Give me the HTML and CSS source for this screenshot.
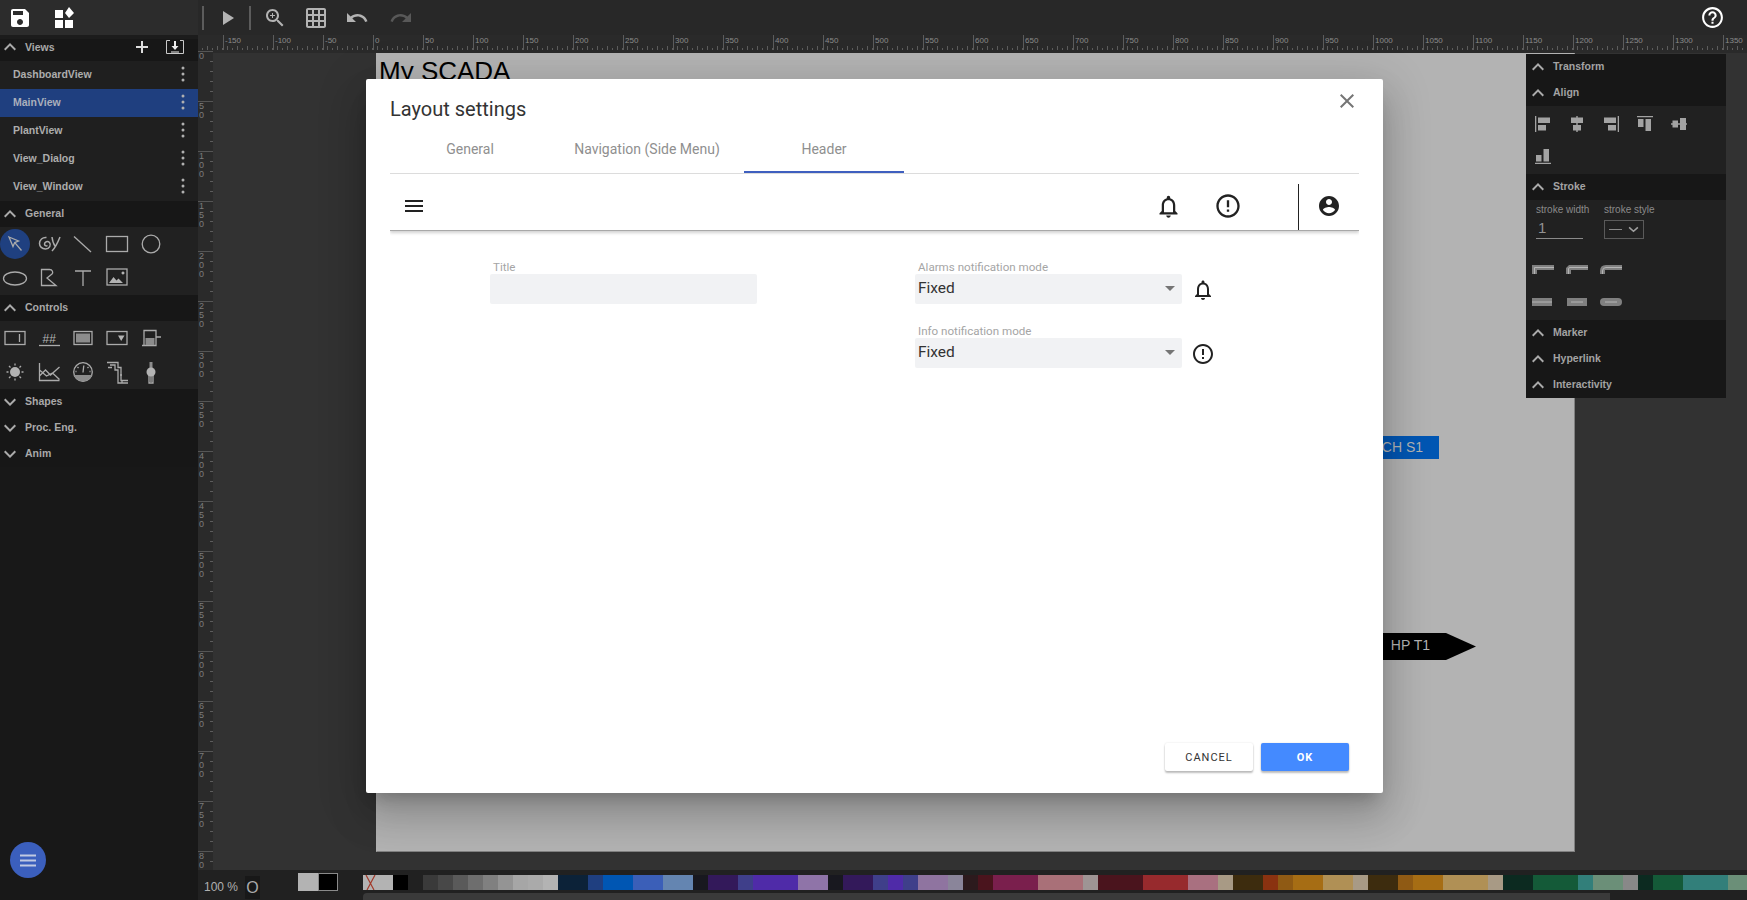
FILE: index.html
```html
<!DOCTYPE html>
<html lang="en">
<head>
<meta charset="utf-8">
<title>Layout settings</title>
<link rel="stylesheet" href="styles.css">
</head>
<body>
<svg class="sprite" aria-hidden="true">
  <symbol id="i-save" viewBox="0 0 24 24"><path d="M17 3H5c-1.11 0-2 .9-2 2v14c0 1.1.89 2 2 2h14c1.1 0 2-.9 2-2V7l-4-4zm-5 16c-1.66 0-3-1.34-3-3s1.34-3 3-3 3 1.34 3 3-1.34 3-3 3zm3-10H5V5h10v4z"/></symbol>
  <symbol id="i-dash" viewBox="0 0 24 24"><path d="M3 4h8v8H3zM3 14h8v8H3zM13 14h8v8h-8zM17 1l5 6-5 5-4-5z"/></symbol>
  <symbol id="i-play" viewBox="0 0 24 24"><path d="M8 5v14l11-7z"/></symbol>
  <symbol id="i-zoom" viewBox="0 0 24 24"><path d="M15.5 14h-.79l-.28-.27C15.41 12.59 16 11.11 16 9.5 16 5.91 13.09 3 9.5 3S3 5.91 3 9.5 5.91 16 9.5 16c1.61 0 3.09-.59 4.23-1.57l.27.28v.79l5 4.99L20.49 19l-4.99-5zm-6 0C7.01 14 5 11.99 5 9.5S7.01 5 9.5 5 14 7.01 14 9.5 11.99 14 9.5 14zm2.5-4h-2v2H9v-2H7V9h2V7h1v2h2v1z"/></symbol>
  <symbol id="i-grid" viewBox="0 0 24 24"><path d="M20 2H4c-1.1 0-2 .9-2 2v16c0 1.1.9 2 2 2h16c1.1 0 2-.9 2-2V4c0-1.1-.9-2-2-2zM8 20H4v-4h4v4zm0-6H4v-4h4v4zm0-6H4V4h4v4zm6 12h-4v-4h4v4zm0-6h-4v-4h4v4zm0-6h-4V4h4v4zm6 12h-4v-4h4v4zm0-6h-4v-4h4v4zm0-6h-4V4h4v4z"/></symbol>
  <symbol id="i-undo" viewBox="0 0 24 24"><path d="M12.5 8c-2.65 0-5.05.99-6.9 2.6L2 7v9h9l-3.62-3.62c1.39-1.16 3.16-1.88 5.12-1.88 3.54 0 6.55 2.31 7.6 5.5l2.37-.78C21.08 11.03 17.15 8 12.5 8z"/></symbol>
  <symbol id="i-redo" viewBox="0 0 24 24"><path d="M18.4 10.6C16.55 8.99 14.15 8 11.5 8c-4.65 0-8.58 3.03-9.96 7.22L3.9 16c1.05-3.19 4.05-5.5 7.6-5.5 1.95 0 3.73.72 5.12 1.88L13 16h9V7l-3.6 3.6z"/></symbol>
  <symbol id="i-help" viewBox="0 0 24 24"><path d="M11 18h2v-2h-2v2zm1-16C6.48 2 2 6.48 2 12s4.48 10 10 10 10-4.48 10-10S17.52 2 12 2zm0 18c-4.41 0-8-3.59-8-8s3.59-8 8-8 8 3.59 8 8-3.59 8-8 8zm0-14c-2.21 0-4 1.79-4 4h2c0-1.1.9-2 2-2s2 .9 2 2c0 2-3 1.75-3 5h2c0-2.25 3-2.5 3-5 0-2.21-1.79-4-4-4z"/></symbol>
  <symbol id="i-menu" viewBox="0 0 24 24"><path d="M3 18h18v-2H3v2zm0-5h18v-2H3v2zm0-7v2h18V6H3z"/></symbol>
  <symbol id="i-bell" viewBox="0 0 24 24"><path d="M12 22c1.1 0 2-.9 2-2h-4c0 1.1.9 2 2 2zm6-6v-5c0-3.07-1.63-5.64-4.5-6.32V4c0-.83-.67-1.5-1.5-1.5s-1.5.67-1.5 1.5v.68C7.64 5.36 6 7.92 6 11v5l-2 2v1h16v-1l-2-2zm-2 1H8v-6c0-2.48 1.51-4.5 4-4.5s4 2.02 4 4.5v6z"/></symbol>
  <symbol id="i-alert" viewBox="0 0 24 24"><path d="M11 15h2v2h-2zm0-8h2v6h-2zm.99-5C6.47 2 2 6.48 2 12s4.47 10 9.99 10C17.52 22 22 17.52 22 12S17.52 2 11.99 2zM12 20c-4.42 0-8-3.58-8-8s3.58-8 8-8 8 3.58 8 8-3.58 8-8 8z"/></symbol>
  <symbol id="i-account" viewBox="0 0 24 24"><path d="M12 2C6.48 2 2 6.48 2 12s4.48 10 10 10 10-4.48 10-10S17.52 2 12 2zm0 3c1.66 0 3 1.34 3 3s-1.34 3-3 3-3-1.34-3-3 1.34-3 3-3zm0 14.2c-2.5 0-4.71-1.28-6-3.22.03-1.99 4-3.08 6-3.08 1.99 0 5.97 1.09 6 3.08-1.29 1.94-3.5 3.22-6 3.22z"/></symbol>
  <symbol id="i-close" viewBox="0 0 24 24"><path d="M19 6.41L17.59 5 12 10.59 6.41 5 5 6.41 10.59 12 5 17.59 6.41 19 12 13.41 17.59 19 19 17.59 13.41 12z"/></symbol>
  <symbol id="i-up" viewBox="0 0 24 24"><path d="M12 8l-6 6 1.41 1.41L12 10.83l4.59 4.58L18 14z"/></symbol>
  <symbol id="i-down" viewBox="0 0 24 24"><path d="M16.59 8.59L12 13.17 7.41 8.59 6 10l6 6 6-6z"/></symbol>
  <symbol id="i-kebab" viewBox="0 0 18 18"><circle cx="9" cy="3" r="1.5"/><circle cx="9" cy="9" r="1.5"/><circle cx="9" cy="15" r="1.5"/></symbol>
</svg>

<div class="app">
  <aside class="sidebar">
    <div class="side-tools">
      <svg class="ico ico-save"><use href="#i-save"/></svg>
      <svg class="ico ico-dash"><use href="#i-dash"/></svg>
    </div>
    <div class="sec-head first"><svg class="chev"><use href="#i-up"/></svg><span class="sec-title">Views</span>
      <svg class="ico-add" viewBox="0 0 12 12"><path d="M5 0h2v5h5v2H7v5H5V7H0V5h5z"/></svg>
      <svg class="ico-import" viewBox="0 0 18 14"><path class="imp-box" d="M4 .5H.5v13h17V.5H14"/><path class="imp-arrow" d="M8 1h2v5h2.5L9 10 5.500 6H8z"/><path class="imp-arrow" d="M5 11.500h8v1H5z"/></svg>
    </div>
    <div class="view-row"><span>DashboardView</span><svg class="kebab"><use href="#i-kebab"/></svg></div>
    <div class="view-row active"><span>MainView</span><svg class="kebab"><use href="#i-kebab"/></svg></div>
    <div class="view-row"><span>PlantView</span><svg class="kebab"><use href="#i-kebab"/></svg></div>
    <div class="view-row"><span>View_Dialog</span><svg class="kebab"><use href="#i-kebab"/></svg></div>
    <div class="view-row"><span>View_Window</span><svg class="kebab"><use href="#i-kebab"/></svg></div>

    <div class="sec-head"><svg class="chev"><use href="#i-up"/></svg><span class="sec-title">General</span></div>
    <div class="tool-grid">
      <div class="tool selected"><svg viewBox="0 0 30 30"><path class="ln" d="M9 8l9.500 4-3.800 1.600L13 17.500zM14.800 13.700L21.500 21.500"/></svg></div>
      <div class="tool"><svg viewBox="0 0 30 30"><path class="ln2" d="M13.500 16.500c-1.500 1-3 0-3-1.500 0-2 3-3.500 5-1.500 2 2.500 0 6.500-4 6.500-3.500 0-6-2.500-6-5.500 0-3.500 3-6.500 7-6M18 8c.5 4 1.500 7 3 9M26 8c-2 5-5 11-8 14"/></svg></div>
      <div class="tool"><svg viewBox="0 0 30 30"><path class="ln" d="M6 7.500L23 23"/></svg></div>
      <div class="tool"><svg viewBox="0 0 30 30"><rect class="ln" x="4.500" y="7.500" width="21" height="15"/></svg></div>
      <div class="tool"><svg viewBox="0 0 30 30"><circle class="ln" cx="15" cy="15" r="8.800"/></svg></div>
      <div class="tool"><svg viewBox="0 0 30 30"><ellipse class="ln" cx="15" cy="15.500" rx="11.500" ry="6.500"/></svg></div>
      <div class="tool"><svg viewBox="0 0 30 30"><path class="ln" d="M7.500 6.500h8c3 0 4 3 2.500 4.500L13 15l9 7.500H7.500z"/></svg></div>
      <div class="tool"><svg viewBox="0 0 30 30"><path class="ln" d="M7 8h16M15 8v15"/></svg></div>
      <div class="tool"><svg viewBox="0 0 30 30"><rect class="ln" x="5" y="6" width="20" height="16"/><path class="fl" d="M7 20l4.500-6 3 3.500 2-2 4.500 4.500zM21 8.500a1.500 1.500 0 1 1-.01 0z"/></svg></div>
    </div>

    <div class="sec-head"><svg class="chev"><use href="#i-up"/></svg><span class="sec-title">Controls</span></div>
    <div class="tool-grid">
      <div class="tool"><svg viewBox="0 0 30 30"><rect class="ln" x="5" y="8.500" width="20" height="13"/><path class="ln" d="M19.500 11v8"/></svg></div>
      <div class="tool"><svg viewBox="0 0 30 30"><text class="hash" x="15" y="19.500" text-anchor="middle">##</text><path class="ln" d="M5 22.500h21"/></svg></div>
      <div class="tool"><svg viewBox="0 0 30 30"><rect class="ln" x="6" y="8.500" width="18" height="13"/><rect class="fl-dim" x="8" y="10.500" width="14" height="9"/></svg></div>
      <div class="tool"><svg viewBox="0 0 30 30"><rect class="ln" x="5" y="8.500" width="20" height="13"/><path class="fl" d="M16 12.500h6.500L19.200 18z"/></svg></div>
      <div class="tool"><svg viewBox="0 0 30 30"><path class="ln" d="M8 22.500V7.500h12V22.500H6M20 14h5"/><rect class="fl-dim" x="9.500" y="15" width="9" height="7"/></svg></div>
      <div class="tool"><svg viewBox="0 0 30 30"><circle class="fl" cx="15" cy="15" r="5"/><path class="ln" d="M15 6.500v2M15 21.500v2M6.500 15h2M21.500 15h2M9 9l1.500 1.500M19.500 19.500L21 21M9 21l1.500-1.500M19.500 10.500L21 9"/></svg></div>
      <div class="tool"><svg viewBox="0 0 30 30"><path class="ln" d="M5.500 6v17.500h20M5.500 19l6-6 5 5 9-8M5.500 13l7 6 6-3 7 6.500"/></svg></div>
      <div class="tool"><svg viewBox="0 0 30 30"><circle class="ln" cx="15" cy="15" r="9.300"/><path class="fl-dim" d="M6 18h18c-1 3.500-4.500 6.300-9 6.300s-8-2.800-9-6.300z"/><path class="ln" d="M15 15.500L15.800 8.500M9.500 10l1 1M20.500 10l-1 1M7.500 14.500h1M21.500 14.500h1"/></svg></div>
      <div class="tool"><svg viewBox="0 0 30 30"><path class="ln" d="M5 5.500h11v5h3v13h7M8 8h5v5h3v13h10M6 10.500h4M18 18h2M20 26v-2"/></svg></div>
      <div class="tool"><svg viewBox="0 0 30 30"><path class="fl-dim" d="M13.500 5h3v8h-3z"/><circle class="fl" cx="15" cy="15" r="4.500"/><path class="ln" d="M13 19v7h4v-7M15 19v6"/></svg></div>
    </div>

    <div class="sec-head"><svg class="chev"><use href="#i-down"/></svg><span class="sec-title">Shapes</span></div>
    <div class="sec-head"><svg class="chev"><use href="#i-down"/></svg><span class="sec-title">Proc. Eng.</span></div>
    <div class="sec-head"><svg class="chev"><use href="#i-down"/></svg><span class="sec-title">Anim</span></div>

    <div class="side-foot"><button class="fab" type="button"><svg viewBox="0 0 24 24"><path d="M4 6.500h16v2H4zM4 11.500h16v2H4zM4 16.500h16v2H4z"/></svg></button></div>
  </aside>

  <div class="work">
    <header class="toolbar">
      <span class="tb-sep first"></span>
      <svg class="tb-play"><use href="#i-play"/></svg>
      <span class="tb-sep"></span>
      <svg class="tb-icon tb-zoom"><use href="#i-zoom"/></svg>
      <svg class="tb-icon tb-grid"><use href="#i-grid"/></svg>
      <svg class="tb-icon tb-undo"><use href="#i-undo"/></svg>
      <svg class="tb-icon tb-redo"><use href="#i-redo"/></svg>
      <svg class="tb-help"><use href="#i-help"/></svg>
    </header>

    <div class="ruler-top">
      <span>-150</span><span>-100</span><span>-50</span><span>0</span><span>50</span><span>100</span><span>150</span><span>200</span><span>250</span><span>300</span><span>350</span><span>400</span><span>450</span><span>500</span><span>550</span><span>600</span><span>650</span><span>700</span><span>750</span><span>800</span><span>850</span><span>900</span><span>950</span><span>1000</span><span>1050</span><span>1100</span><span>1150</span><span>1200</span><span>1250</span><span>1300</span><span>1350</span>
    </div>

    <div class="mid">
      <div class="ruler-left">
        <span>0</span><span>5<br>0</span><span>1<br>0<br>0</span><span>1<br>5<br>0</span><span>2<br>0<br>0</span><span>2<br>5<br>0</span><span>3<br>0<br>0</span><span>3<br>5<br>0</span><span>4<br>0<br>0</span><span>4<br>5<br>0</span><span>5<br>0<br>0</span><span>5<br>5<br>0</span><span>6<br>0<br>0</span><span>6<br>5<br>0</span><span>7<br>0<br>0</span><span>7<br>5<br>0</span><span>8<br>0</span>
      </div>
      <div class="canvas">
        <div class="page">
          <div class="page-title">My SCADA</div>
          <div class="tag-blue">CH S1</div>
          <div class="tag-arrow">HP T1</div>
        </div>

        <div class="props">
          <div class="sec-head"><svg class="chev"><use href="#i-up"/></svg><span class="sec-title">Transform</span></div>
          <div class="sec-head"><svg class="chev"><use href="#i-up"/></svg><span class="sec-title">Align</span></div>
          <div class="align-grid">
            <div class="tool"><svg class="al" viewBox="0 0 16 16"><path d="M0 0h1.300v16H0zM3 1.500h12v5.500H3zM3 9h8v5.500H3z"/></svg></div>
            <div class="tool"><svg class="al" viewBox="0 0 16 16"><path d="M7.300 0h1.400v16H7.300zM2 1.500h12v5.500H2zM4 9h8v5.500H4z"/></svg></div>
            <div class="tool"><svg class="al" viewBox="0 0 16 16"><path d="M14.700 0H16v16h-1.300zM1 1.500h12v5.500H1zM5 9h8v5.500H5z"/></svg></div>
            <div class="tool"><svg class="al" viewBox="0 0 16 16"><path d="M0 0h16v1.300H0zM1 3h5.500v8H1zM8.500 3H14v12H8.500z"/></svg></div>
            <div class="tool"><svg class="al" viewBox="0 0 16 16"><path d="M0 7.300h16v1.400H0zM1.500 4.500H7v7H1.500zM9 2h6v12H9z"/></svg></div>
            <div class="tool"><svg class="al" viewBox="0 0 16 16"><path d="M0 14.700h16V16H0zM1 7h5.500v6.500H1zM8.500 1H14v12.500H8.500z"/></svg></div>
          </div>
          <div class="sec-head"><svg class="chev"><use href="#i-up"/></svg><span class="sec-title">Stroke</span></div>
          <div class="stroke-body">
            <div class="stroke-fields">
              <div class="sf sf-width"><label class="sf-label">stroke width</label><div class="sf-input">1</div></div>
              <div class="sf"><label class="sf-label">stroke style</label>
                <div class="sf-select"><span class="dash"></span><svg viewBox="0 0 12 8"><path d="M1 1.500l5 4.500 5-4.500" /></svg></div>
              </div>
            </div>
            <div class="join-row">
              <svg viewBox="0 0 22 9"><path class="j-o" d="M0 0h22v5H5v4H0z"/><path class="j-i" d="M2.500 9V2.500H22"/></svg>
              <svg viewBox="0 0 22 9"><path class="j-o" d="M3 0h19v5H5v4H0V3z"/><path class="j-i" d="M2.500 9V4q0-1.500 1.500-1.500h18"/></svg>
              <svg viewBox="0 0 22 9"><path class="j-o" d="M6 0h16v5H5v4H0V6q0-6 6-6z"/><path class="j-i" d="M2.500 9V6q0-3.500 3.500-3.500h16"/></svg>
            </div>
            <div class="cap-row">
              <svg viewBox="0 0 22 8"><rect class="j-o" x="0" y="0" width="20" height="8"/><path class="j-i" d="M0 4h20"/></svg>
              <svg viewBox="0 0 22 8"><rect class="j-o" x="1" y="0" width="20" height="8"/><path class="j-i" d="M5 4h12"/></svg>
              <svg viewBox="0 0 22 8"><rect class="j-o" x="0" y="0" width="22" height="8" rx="4"/><path class="j-i" d="M5 4h12"/></svg>
            </div>
          </div>
          <div class="sec-head"><svg class="chev"><use href="#i-up"/></svg><span class="sec-title">Marker</span></div>
          <div class="sec-head"><svg class="chev"><use href="#i-up"/></svg><span class="sec-title">Hyperlink</span></div>
          <div class="sec-head"><svg class="chev"><use href="#i-up"/></svg><span class="sec-title">Interactivity</span></div>
        </div>
      </div>
    </div>

    <footer class="bottom">
      <span class="zoom-label">100 %</span>
      <span class="zoom-o">O</span>
      <span class="current"><i class="cur-fill"></i><i class="cur-stroke"></i></span>
      <div class="palette-wrap">
        <div class="palette">
          <i class="w1 cb3 none"><svg viewBox="0 0 15 15"><path d="M3 0l8 15M12 0L4 15"/></svg></i><i class="w1 cb3"></i><i class="w1 c00"></i><i class="w1"></i>
          <i class="w1 g3a"></i><i class="w1 g48"></i><i class="w1 g5a"></i><i class="w1 g6e"></i><i class="w1 g80"></i><i class="w1 g94"></i><i class="w1 ga6"></i><i class="w1 gaa"></i><i class="w1 cb3"></i>
          <i class="w2 navy"></i><i class="w1 blue1"></i><i class="w2 blue2"></i><i class="w2 blue3"></i><i class="w2 blue4"></i>
          <i class="w1 ink"></i><i class="w2 pur1"></i><i class="w1 pur2"></i><i class="w3 pur3"></i><i class="w2 pur4"></i>
          <i class="w1 ink"></i><i class="w2 pur1"></i><i class="w1 pur2"></i><i class="w1 pur3"></i><i class="w1 pur2"></i><i class="w2 pur5"></i><i class="w1 pur6"></i>
          <i class="w1 red0"></i><i class="w1 red1"></i><i class="w3 red2"></i><i class="w3 red3"></i><i class="w1 red4"></i>
          <i class="w3 red1"></i><i class="w3 red5"></i><i class="w2 red6"></i><i class="w1 sand"></i>
          <i class="w2 brn1"></i><i class="w1 brn2"></i><i class="w1 brn3"></i><i class="w2 brn4"></i><i class="w2 brn5"></i><i class="w1 sand"></i>
          <i class="w2 brn1"></i><i class="w1 brn3"></i><i class="w2 brn4"></i><i class="w3 brn5"></i><i class="w1 sand"></i>
          <i class="w2 grn1"></i><i class="w3 grn2"></i><i class="w1 grn3"></i><i class="w2 grn4"></i><i class="w1 g88"></i>
          <i class="w1 grn1"></i><i class="w2 grn2"></i><i class="w3 grn3"></i><i class="w2 grn4"></i>
        </div>
        <div class="hscroll"></div>
      </div>
    </footer>
  </div>

  <div class="dialog">
    <h2 class="dlg-title">Layout settings</h2>
    <svg class="dlg-close"><use href="#i-close"/></svg>
    <nav class="tabs">
      <span class="tab">General</span>
      <span class="tab nav">Navigation (Side Menu)</span>
      <span class="tab active">Header</span>
    </nav>
    <div class="preview">
      <svg class="pv-menu"><use href="#i-menu"/></svg>
      <svg class="pv-bell"><use href="#i-bell"/></svg>
      <svg class="pv-alert"><use href="#i-alert"/></svg>
      <span class="pv-line"></span>
      <svg class="pv-user"><use href="#i-account"/></svg>
    </div>
    <div class="form">
      <div class="col col-left">
        <div class="field"><label class="f-label">Title</label><div class="f-box"></div></div>
      </div>
      <div class="col col-right">
        <div class="f-row">
          <div class="field"><label class="f-label">Alarms notification mode</label><div class="f-box select"><span>Fixed</span><i class="caret"></i></div></div>
          <svg class="f-icon"><use href="#i-bell"/></svg>
        </div>
        <div class="f-row">
          <div class="field"><label class="f-label">Info notification mode</label><div class="f-box select"><span>Fixed</span><i class="caret"></i></div></div>
          <svg class="f-icon"><use href="#i-alert"/></svg>
        </div>
      </div>
    </div>
    <div class="dlg-actions">
      <button class="btn" type="button">CANCEL</button>
      <button class="btn primary" type="button">OK</button>
    </div>
  </div>
</div>
</body>
</html>
```

FILE: styles.css
```css
* { box-sizing: border-box; }
html, body { margin: 0; height: 100%; overflow: hidden; }
body { font-family: "Liberation Sans", Arial, sans-serif; background: #333; }
.sprite { position: absolute; width: 0; height: 0; }
.app { position: relative; display: flex; width: 1747px; height: 900px; overflow: hidden; }

/* Left sidebar */
.sidebar { width: 198px; flex: none; display: flex; flex-direction: column; background: #181818; }
.side-tools { height: 35px; flex: none; display: flex; align-items: center; background: #2c2c2c; }
.ico { fill: #fff; }
.ico-save { width: 24px; height: 24px; margin-left: 8px; }
.ico-dash { width: 24px; height: 24px; margin-left: 20px; }

.sec-head { height: 26px; flex: none; display: flex; align-items: center; background: #171717; padding-left: 0; }
.sec-head.first { box-shadow: inset 0 4px #1c1c1c; padding-bottom: 2px; }
.sidebar .chev { margin-left: -2px; }
.chev { width: 24px; height: 24px; fill: #ababab; flex: none; }
.sec-title { margin: 0 0 2px 3px; font-size: 10.500px; font-weight: 700; color: #a9a9a9; }
.first .sec-title { margin-bottom: 0; }
.ico-add { width: 12px; height: 12px; fill: #ddd; margin-left: 81px; }
.ico-import { width: 18px; height: 14px; margin-left: 18px; }
.imp-box { fill: none; stroke: #c9c9c9; }
.imp-arrow { fill: #eee; }

.view-row { height: 28px; flex: none; display: flex; align-items: center; justify-content: space-between; padding: 0 6px 2px 13px; background: #1f1f1f; font-size: 10.500px; font-weight: 700; color: #adadad; }
.view-row.active { background: #1f3f7f; color: #aab0bc; }
.kebab { width: 18px; height: 18px; fill: #b0b0b0; }

.tool-grid, .align-grid { display: grid; grid-template-columns: repeat(5, 30px); column-gap: 4px; background: #212121; flex: none; }
.tool-grid { row-gap: 4px; padding: 2px 0; }
.align-grid { row-gap: 2px; padding: 3px 0 3px 2px; }
.tool { width: 30px; height: 30px; display: flex; align-items: center; justify-content: center; border-radius: 50%; }
.tool svg { width: 30px; height: 30px; }
.tool.selected { background: #1f4080; }
.ln { fill: none; stroke: #ababab; stroke-width: 1.300; }
.ln2 { fill: none; stroke: #ababab; stroke-width: 1.500; }
.fl { fill: #b3b3b3; }
.fl-dim { fill: #8c8c8c; }
.hash { font-family: "Liberation Sans", Arial, sans-serif; font-size: 12px; font-style: italic; fill: #b3b3b3; }
.tool svg.al { width: 16px; height: 16px; fill: #a3a3a3; }

.side-foot { flex: 1; position: relative; }
.fab { position: absolute; left: 10px; bottom: 22px; width: 36px; height: 36px; padding: 6px; border: 0; border-radius: 50%; background: #3b5fbd; }
.fab svg { display: block; width: 24px; height: 24px; fill: #c0c9e2; }

/* Work area */
.work { flex: 1; min-width: 0; display: flex; flex-direction: column; }
.toolbar { height: 35px; flex: none; display: flex; align-items: center; background: #282828; }
.tb-sep { width: 2px; height: 24px; background: #5c5c5c; margin-left: 16px; }
.tb-sep.first { margin-left: 4px; }
.tb-play { width: 24px; height: 24px; fill: #b3b3b3; margin-left: 11px; margin-right: -6px; }
.tb-icon { width: 24px; height: 24px; fill: #b3b3b3; }
.tb-zoom { margin-left: 12px; }
.tb-grid { margin-left: 17px; }
.tb-undo { margin-left: 17px; }
.tb-redo { margin-left: 20px; fill: #585858; }
.tb-help { width: 25px; height: 25px; fill: #fff; margin-left: auto; margin-right: 22px; }

.ruler-top { height: 16px; flex: none; display: flex; padding-left: 25px; overflow: hidden; background-color: #2a2a2a;
  background-image: repeating-linear-gradient(90deg, transparent 0 4px, #5c5c5c 4px 5px), repeating-linear-gradient(90deg, transparent 0 9px, #5c5c5c 9px 10px);
  background-size: 100% 2px, 100% 4px; background-position: 0 13px, 0 11px; background-repeat: no-repeat; }
.ruler-top span { flex: none; width: 50px; height: 15px; border-left: 1px solid #5c5c5c; padding-left: 1px; font-size: 8px; line-height: 12px; color: #8a8a8a; }

.mid { flex: 1; min-height: 0; display: flex; }
.ruler-left { width: 15px; flex: none; overflow: hidden; background-color: #2a2a2a;
  background-image: repeating-linear-gradient(180deg, transparent 0 9px, #5c5c5c 9px 10px);
  background-size: 3px 100%; background-position: right 0 top 1px; background-repeat: no-repeat; }
.ruler-left span { display: block; height: 50px; border-top: 1px solid #555; padding-left: 1px; font-size: 9px; line-height: 9px; color: #7c7c7c; }

.canvas { position: relative; flex: 1; min-width: 0; overflow: hidden; background: #323232; border-top: 2px solid #2a2a2a; }
.page { position: absolute; left: 163px; top: 0; width: 1199px; height: 799px; background: #b3b3b3; border: 1px solid #808080; border-top-color: #b3b3b3; border-left-color: #b3b3b3; }
.page-title { margin: 4px 0 0 2px; font-size: 26px; line-height: 27px; color: #000; }
.tag-blue { position: absolute; left: 994px; top: 382px; width: 68px; height: 23px; padding-right: 16px; background: #0056b3; text-align: right; font-size: 14px; line-height: 23px; color: #b3b3b3; }
.tag-arrow { position: absolute; left: 994px; top: 579px; width: 105px; height: 27px; padding-right: 46px; background: #000; text-align: right; font-size: 14px; line-height: 25px; color: #b3b3b3; clip-path: polygon(0 0, 75px 0, 100% 50%, 75px 100%, 0 100%); }

/* Right properties panel */
.props { position: absolute; left: 1313px; top: 1px; width: 200px; background: #171717; }
.props .sec-title { color: #a3a3a3; }
.stroke-body { height: 120px; background: #212121; padding: 3px 0 0 10px; }
.stroke-fields { display: flex; }
.sf-width { width: 68px; }
.sf-label { display: block; font-size: 10px; line-height: 14px; color: #8a8a8a; }
.sf-input { width: 47px; height: 22px; border-bottom: 1px solid #8a8a8a; padding: 0 0 0 2px; font-size: 15px; line-height: 22px; color: #929292; }
.sf-select { display: flex; align-items: center; justify-content: space-between; width: 40px; height: 19px; margin-top: 3px; border: 1px solid #5a5a5a; padding: 0 4px; }
.dash { width: 13px; height: 1px; background: #8a8a8a; }
.sf-select svg { width: 11px; height: 7px; fill: none; stroke: #a0a0a0; stroke-width: 1.800; }
.join-row, .cap-row { display: flex; gap: 12px; margin-left: -4px; }
.join-row { margin-top: 26px; }
.cap-row { margin-top: 24px; }
.join-row svg { width: 22px; height: 9px; }
.cap-row svg { width: 22px; height: 8px; }
.j-o { fill: #808080; }
.j-i { fill: none; stroke: #b5b5b5; stroke-width: 1; }

/* Bottom colours */
.bottom { height: 30px; flex: none; display: flex; align-items: flex-start; background: #212121; }
.zoom-label { margin: 10px 0 0 6px; width: 34px; font-size: 12px; line-height: 14px; color: #b0b0b0; white-space: nowrap; }
.zoom-o { width: 15px; height: 23px; margin: 6px 0 0 7px; background: #181818; font-size: 16px; line-height: 23px; text-align: center; color: #aaa; }
.current { display: flex; margin: 3px 0 0 38px; }
.current i { display: block; width: 20px; height: 18px; }
.cur-fill { background: #b3b3b3; }
.cur-stroke { background: #000; border: 1px solid #8a8a8a; }
.palette-wrap { flex: 1; min-width: 0; margin: 5px 0 0 25px; overflow: hidden; }
.palette { display: flex; height: 15px; }
.palette i { display: block; flex: none; height: 15px; }
.palette .none svg { display: block; width: 15px; height: 15px; fill: none; stroke: #a33a2a; stroke-width: 1.200; }
.hscroll { width: 1247px; height: 7px; margin-top: 3px; background: #3a3a3a; border-top-left-radius: 4px; }
.w1 { width: 15px; } .w2 { width: 30px; } .w3 { width: 45px; }
.cb3 { background: #b3b3b3; } .c00 { background: #000; }
.g3a { background: #3a3a3a; } .g48 { background: #484848; } .g5a { background: #5a5a5a; } .g6e { background: #6e6e6e; }
.g80 { background: #808080; } .g88 { background: #888; } .g94 { background: #949494; } .ga6 { background: #a6a6a6; } .gaa { background: #aaa; }
.navy { background: #0c2238; } .blue1 { background: #1f3f80; } .blue2 { background: #0056b3; } .blue3 { background: #3b5fb8; } .blue4 { background: #6485b1; }
.ink { background: #18181f; } .pur1 { background: #33195a; } .pur2 { background: #3f3f8a; } .pur3 { background: #4f2ba8; } .pur4 { background: #8f74a8; } .pur5 { background: #8f74a0; } .pur6 { background: #8a859a; }
.red0 { background: #2c1a1d; } .red1 { background: #4a141d; } .red2 { background: #7a1f4d; } .red3 { background: #a97078; } .red4 { background: #9e9494; } .red5 { background: #972a2d; } .red6 { background: #a97080; }
.sand { background: #a89a85; }
.brn1 { background: #3d2c0e; } .brn2 { background: #8a3210; } .brn3 { background: #8f5a14; } .brn4 { background: #a66d14; } .brn5 { background: #b09055; }
.grn1 { background: #0c2a20; } .grn2 { background: #145a38; } .grn3 { background: #327f7a; } .grn4 { background: #6b8f78; }

/* Dialog */
.dialog { position: absolute; left: 366px; top: 79px; width: 1017px; height: 714px; display: flex; flex-direction: column; padding: 16px 24px 22px; background: #fff; border-radius: 2px; font-family: Roboto, "Liberation Sans", sans-serif; box-shadow: 0 11px 15px -7px rgba(0,0,0,.2), 0 24px 38px 3px rgba(0,0,0,.14), 0 9px 46px 8px rgba(0,0,0,.12); }
.dlg-title { margin: 0; font-size: 20px; font-weight: 400; line-height: 28px; color: #333; }
.dlg-close { position: absolute; right: 24px; top: 10px; width: 24px; height: 24px; fill: #757575; }
.tabs { display: flex; height: 49px; margin-top: 2px; border-bottom: 1px solid #dcdcdc; flex: none; }
.tab { width: 160px; height: 48px; text-align: center; font-size: 14px; line-height: 48px; color: #8f8f8f; }
.tab.nav { width: 194px; }
.tab.active { border-bottom: 2px solid #3f5fbf; }
.preview { height: 57px; flex: none; display: flex; align-items: center; border-bottom: 1px solid #a8a8a8; box-shadow: 0 2px 3px rgba(0,0,0,.18); clip-path: inset(0 0 -6px 0); padding: 7px 18px 0 0; }
.pv-menu { width: 24px; height: 24px; margin-left: 12px; margin-right: auto; fill: #222; }
.pv-bell { width: 27px; height: 27px; margin-top: 2px; fill: #222; }
.pv-alert { width: 28px; height: 28px; margin-left: 32px; fill: #222; }
.pv-line { align-self: flex-end; width: 1px; height: 46px; margin-left: 56px; background: #222; }
.pv-user { width: 24px; height: 24px; margin-left: 18px; fill: #222; }
.form { display: flex; flex: none; padding: 29px 0 0 100px; }
.col-left { width: 425px; }
.col-right { display: flex; flex-direction: column; gap: 20px; }
.f-row { display: flex; align-items: flex-end; }
.field { width: 267px; }
.f-label { display: block; height: 14px; padding-left: 3px; font-size: 11.600px; line-height: 14px; color: #a5a5a5; white-space: nowrap; }
.f-box { height: 30px; background: #f1f2f4; border-radius: 2px; }
.select { display: flex; align-items: center; justify-content: space-between; padding: 0 7px 2px 3px; font-size: 15.500px; color: #333; }
.caret { width: 0; height: 0; border-left: 5px solid transparent; border-right: 5px solid transparent; border-top: 5px solid #757575; }
.f-icon { width: 24px; height: 24px; margin: 0 0 2px 9px; fill: #222; }
.dlg-actions { display: flex; justify-content: flex-end; gap: 8px; margin-top: auto; padding-right: 10px; }
.btn { width: 88px; height: 28px; padding: 0; border: 0; border-radius: 2px; background: #fff; font-family: Roboto, "Liberation Sans", sans-serif; font-size: 11px; font-weight: 400; letter-spacing: 1px; color: #333; box-shadow: 0 2px 2px rgba(0,0,0,.25), 0 0 2px rgba(0,0,0,.12); }
.btn.primary { background: #448aff; color: #fff; font-weight: 700; }
```
